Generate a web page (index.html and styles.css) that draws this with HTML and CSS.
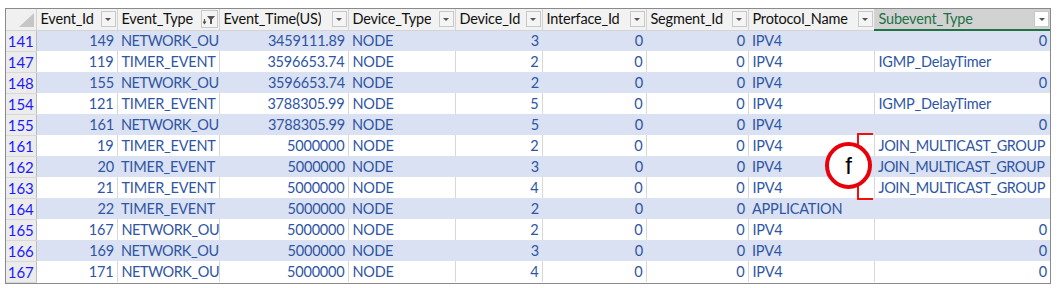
FILE: index.html
```html
<!DOCTYPE html>
<html>
<head>
<meta charset="utf-8">
<link rel="stylesheet" href="styles.css">
</head>
<body>
<div class="sheet">
  <table class="grid">
    <colgroup>
      <col class="w-rh"><col class="w1"><col class="w2"><col class="w3"><col class="w4"><col class="w5"><col class="w6"><col class="w7"><col class="w8"><col class="w9">
    </colgroup>
    <thead>
      <tr>
        <th class="corner"><span class="selall"></span></th>
        <th><div class="hc"><span class="ht">Event_Id</span><span class="fb"><span class="tri"></span></span></div></th>
        <th><div class="hc"><span class="ht">Event_Type</span><span class="fb fbig">
          <svg width="13" height="11" viewBox="0 0 13 11"><path d="M1.5 5 V9 M0 7.5 L1.5 9.5 L3 7.5" stroke="#555" stroke-width="1.2" fill="none"/><path d="M4 2 H12 L9 5.5 V10 H7 V5.5 Z" fill="#555"/></svg>
        </span></div></th>
        <th><div class="hc"><span class="ht">Event_Time(US)</span><span class="fb"><span class="tri"></span></span></div></th>
        <th><div class="hc"><span class="ht">Device_Type</span><span class="fb"><span class="tri"></span></span></div></th>
        <th><div class="hc"><span class="ht">Device_Id</span><span class="fb"><span class="tri"></span></span></div></th>
        <th><div class="hc"><span class="ht">Interface_Id</span><span class="fb"><span class="tri"></span></span></div></th>
        <th><div class="hc"><span class="ht">Segment_Id</span><span class="fb"><span class="tri"></span></span></div></th>
        <th><div class="hc"><span class="ht">Protocol_Name</span><span class="fb"><span class="tri"></span></span></div></th>
        <th class="sel"><div class="hc"><span class="ht">Subevent_Type</span><span class="fb wb"><span class="tri"></span></span></div></th>
      </tr>
    </thead>
    <tbody>
      <tr class="b"><td class="rh">141</td><td class="n">149</td><td class="fit">NETWORK_OU</td><td class="n">3459111.89</td><td>NODE</td><td class="n">3</td><td class="n">0</td><td class="n">0</td><td>IPV4</td><td class="n">0</td></tr>
      <tr class="w"><td class="rh">147</td><td class="n">119</td><td>TIMER_EVENT</td><td class="n">3596653.74</td><td>NODE</td><td class="n">2</td><td class="n">0</td><td class="n">0</td><td>IPV4</td><td>IGMP_DelayTimer</td></tr>
      <tr class="b"><td class="rh">148</td><td class="n">155</td><td class="fit">NETWORK_OU</td><td class="n">3596653.74</td><td>NODE</td><td class="n">2</td><td class="n">0</td><td class="n">0</td><td>IPV4</td><td class="n">0</td></tr>
      <tr class="w"><td class="rh">154</td><td class="n">121</td><td>TIMER_EVENT</td><td class="n">3788305.99</td><td>NODE</td><td class="n">5</td><td class="n">0</td><td class="n">0</td><td>IPV4</td><td>IGMP_DelayTimer</td></tr>
      <tr class="b"><td class="rh">155</td><td class="n">161</td><td class="fit">NETWORK_OU</td><td class="n">3788305.99</td><td>NODE</td><td class="n">5</td><td class="n">0</td><td class="n">0</td><td>IPV4</td><td class="n">0</td></tr>
      <tr class="w"><td class="rh">161</td><td class="n">19</td><td>TIMER_EVENT</td><td class="n">5000000</td><td>NODE</td><td class="n">2</td><td class="n">0</td><td class="n">0</td><td>IPV4</td><td class="fit">JOIN_MULTICAST_GROUP</td></tr>
      <tr class="b"><td class="rh">162</td><td class="n">20</td><td>TIMER_EVENT</td><td class="n">5000000</td><td>NODE</td><td class="n">3</td><td class="n">0</td><td class="n">0</td><td>IPV4</td><td class="fit">JOIN_MULTICAST_GROUP</td></tr>
      <tr class="w"><td class="rh">163</td><td class="n">21</td><td>TIMER_EVENT</td><td class="n">5000000</td><td>NODE</td><td class="n">4</td><td class="n">0</td><td class="n">0</td><td>IPV4</td><td class="fit">JOIN_MULTICAST_GROUP</td></tr>
      <tr class="b"><td class="rh">164</td><td class="n">22</td><td>TIMER_EVENT</td><td class="n">5000000</td><td>NODE</td><td class="n">2</td><td class="n">0</td><td class="n">0</td><td>APPLICATION</td><td></td></tr>
      <tr class="w"><td class="rh">165</td><td class="n">167</td><td class="fit">NETWORK_OU</td><td class="n">5000000</td><td>NODE</td><td class="n">2</td><td class="n">0</td><td class="n">0</td><td>IPV4</td><td class="n">0</td></tr>
      <tr class="b"><td class="rh">166</td><td class="n">169</td><td class="fit">NETWORK_OU</td><td class="n">5000000</td><td>NODE</td><td class="n">3</td><td class="n">0</td><td class="n">0</td><td>IPV4</td><td class="n">0</td></tr>
      <tr class="w"><td class="rh">167</td><td class="n">171</td><td class="fit">NETWORK_OU</td><td class="n">5000000</td><td>NODE</td><td class="n">4</td><td class="n">0</td><td class="n">0</td><td>IPV4</td><td class="n">0</td></tr>
    </tbody>
  </table>
  <div class="callout">
    <span class="bracket"></span>
    <span class="circle">f</span>
  </div>
</div>
</body>
</html>
```
FILE: styles.css
```css
html, body {
  margin: 0;
  padding: 0;
  background: #ffffff;
}
body {
  padding: 8px 0 0 5px;
  font-family: Lato, "Liberation Sans", sans-serif;
}
.sheet {
  position: relative;
  width: 1044px;
  border: 1px solid #8a8a8a;
}
.grid {
  table-layout: fixed;
  border-collapse: collapse;
  width: 1044px;
  font-size: 14.5px;
  letter-spacing: -0.2px;
}
.w-rh { width: 30px; }
.w1 { width: 81px; }
.w2 { width: 102px; }
.w3 { width: 129px; }
.w4 { width: 107px; }
.w5 { width: 87px; }
.w6 { width: 104px; }
.w7 { width: 102px; }
.w8 { width: 126px; }
.w9 { width: 176px; }

th {
  height: 20px;
  padding: 0;
  background: #f2f2f2;
  border-right: 1px solid #d4d4d4;
  border-bottom: 1px solid #d4d4d4;
  font-weight: normal;
  color: #111;
  text-align: left;
}
th:last-child { border-right: none; }
.hc {
  display: flex;
  align-items: center;
  justify-content: space-between;
  height: 20px;
  padding-left: 4px;
  padding-right: 1px;
  overflow: hidden;
}
.ht {
  white-space: nowrap;
  overflow: hidden;
  line-height: 20px;
}
.fb {
  flex: none;
  width: 15px;
  height: 16px;
  box-sizing: border-box;
  border: 1px solid #c8c8c8;
  background: #f4f4f4;
  display: flex;
  align-items: center;
  justify-content: center;
}
.fb.fbig {
  width: 17px;
  height: 18px;
}
.fb.wb { background: #ffffff; }
.tri {
  width: 0;
  height: 0;
  border-left: 3px solid transparent;
  border-right: 3px solid transparent;
  border-top: 3px solid #555;
  margin-top: 1px;
}
.corner {
  background: #f0f0f0;
}
.selall {
  display: block;
  width: 0;
  height: 0;
  margin: 3px 2px 1px auto;
  border-left: 15px solid transparent;
  border-bottom: 14px solid #c6c6c6;
}
th.sel {
  background: #d2d2d2;
  color: #217346;
  border-bottom: 2px solid #217346;
}

td {
  height: 21px;
  padding: 0 3px 0 4px;
  box-sizing: border-box;
  white-space: nowrap;
  overflow: hidden;
  color: #2f55a4;
  line-height: 20px;
}
td.n { text-align: right; }
td.fit {
  padding-right: 0;
  letter-spacing: -0.45px;
}
td.rh {
  background: #ececec;
  color: #1a1aff;
  text-align: center;
  padding: 0;
  letter-spacing: 0;
  font-size: 15px;
  border-right: 1px solid #bdbdbd;
  border-bottom: 1px solid #d8d8d8;
}
tr.b td { background: #d9e1f2; }
tr.b td.rh { background: #ececec; }
tr.w td { background: #ffffff; border-right: 1px solid #d8d8d8; }
tr.w td.rh { background: #ececec; border-right: 1px solid #bdbdbd; }
tr.w td:last-child { border-right: none; }

.callout {
  position: absolute;
  left: 819px;
  top: 124px;
  width: 50px;
  height: 70px;
}
.bracket {
  position: absolute;
  left: 32px;
  top: 0;
  width: 16px;
  height: 67px;
  box-sizing: border-box;
  border: 2px solid #f01010;
  border-right: none;
}
.circle {
  position: absolute;
  left: 0;
  top: 9px;
  width: 47px;
  height: 47px;
  box-sizing: border-box;
  border: 4px solid #e8000b;
  border-radius: 50%;
  background: #ffffff;
  color: #000;
  font-family: "Liberation Sans", sans-serif;
  font-size: 24px;
  display: flex;
  align-items: center;
  justify-content: center;
}
```
